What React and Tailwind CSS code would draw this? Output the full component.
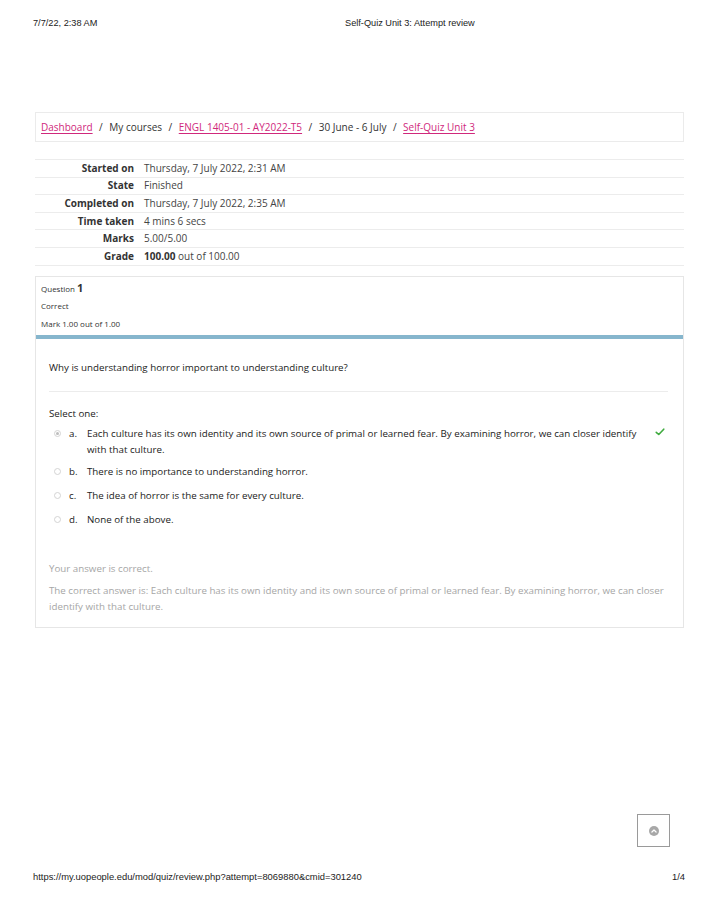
import React from "react";

const crumbs = [
  { text: "Dashboard", link: true },
  { text: "My courses", link: false },
  { text: "ENGL 1405-01 - AY2022-T5", link: true },
  { text: "30 June - 6 July", link: false },
  { text: "Self-Quiz Unit 3", link: true },
];

const summary = [
  ["Started on", "Thursday, 7 July 2022, 2:31 AM"],
  ["State", "Finished"],
  ["Completed on", "Thursday, 7 July 2022, 2:35 AM"],
  ["Time taken", "4 mins 6 secs"],
  ["Marks", "5.00/5.00"],
  ["Grade", null],
];

const options = [
  {
    letter: "a.",
    text: "Each culture has its own identity and its own source of primal or learned fear. By examining horror, we can closer identify with that culture.",
    checked: true,
  },
  { letter: "b.", text: "There is no importance to understanding horror." },
  { letter: "c.", text: "The idea of horror is the same for every culture." },
  { letter: "d.", text: "None of the above." },
];

function Radio({ checked }) {
  return (
    <span className="mt-[4.5px] flex h-[7px] w-[7px] shrink-0 items-center justify-center rounded-full border border-[#d4d4d4] bg-white">
      {checked && <span className="h-[3px] w-[3px] rounded-full bg-[#bdbdbd]" />}
    </span>
  );
}

export default function App() {
  return (
    <div
      className="relative flex h-[918px] w-[714px] flex-col bg-white text-[#1d2125]"
      style={{ fontFamily: '"Open Sans", "Noto Sans", sans-serif' }}
    >
      {/* print header */}
      <header
        className="flex px-[33px] pt-[18px] text-[9.2px] leading-[10px] text-[#222]"
        style={{ fontFamily: '"Liberation Sans", Arial, sans-serif' }}
      >
        <span className="w-[312px]">7/7/22, 2:38 AM</span>
        <span>Self-Quiz Unit 3: Attempt review</span>
      </header>

      <main className="ml-[35px] mr-[30px] mt-[84px] flex flex-col">
        {/* breadcrumb */}
        <nav className="flex h-[30px] items-center border border-[#ebebeb] px-[5px] text-[10px]">
          {crumbs.map((c, i) => (
            <React.Fragment key={c.text}>
              {i > 0 && <span className="mx-[6.5px] text-[#333]">/</span>}
              <span className={c.link ? "text-[#d0287c] underline underline-offset-2" : "text-[#333]"}>
                {c.text}
              </span>
            </React.Fragment>
          ))}
        </nav>

        {/* summary table */}
        <div className="mt-[17px] flex flex-col border-b border-[#ececec] text-[10px]">
          {summary.map(([label, value]) => (
            <div key={label} className="flex h-[17.6px] items-center border-t border-[#ececec]">
              <span className="w-[99px] text-right font-bold text-[#333]">{label}</span>
              <span className="ml-[10px] text-[#444]">
                {value ?? (
                  <>
                    <b className="text-[#333]">100.00</b> out of 100.00
                  </>
                )}
              </span>
            </div>
          ))}
        </div>

        {/* question */}
        <section className="mt-[10px] flex h-[352px] flex-col border border-[#e6e6e6]">
          <div className="flex flex-col px-[5px] pt-[6px] text-[8px] leading-[9px] text-[#333]">
            <div className="flex items-baseline">
              <span>Question</span>
              <span className="ml-[2px] text-[11px] font-bold">1</span>
            </div>
            <div className="mt-[8px]">Correct</div>
            <div className="mt-[9px]">Mark 1.00 out of 1.00</div>
          </div>
          <div className="mt-[7px] h-[4px] bg-[#86b6cd]" />

          <div className="flex flex-col px-[13px] text-[9.75px] leading-[16px]">
            <p className="mt-[21px] text-[#222]">Why is understanding horror important to understanding culture?</p>
            <div className="mt-[15px] mr-[2px] border-t border-[#ececec]" />
            <p className="mt-[14px] text-[#222]">Select one:</p>
            <div className="flex flex-col">
              {options.map((o) => (
                <div key={o.letter} className={`flex pl-[5px] pt-[4px] text-[#222] ${o.checked ? "pb-[2px]" : "pb-[4px]"}`}>
                  <Radio checked={o.checked} />
                  <span className="ml-[8px] w-[18px] shrink-0">{o.letter}</span>
                  <span className="w-[558px]">{o.text}</span>
                  {o.checked && (
                    <svg viewBox="0 0 16 16" className="ml-[10px] mt-[1px] h-[10px] w-[10px] shrink-0">
                      <path d="M2 8.5 L6 12 L14 3.5" fill="none" stroke="#3fab3f" strokeWidth="2.6" strokeLinecap="round" strokeLinejoin="round" />
                    </svg>
                  )}
                </div>
              ))}
            </div>
            <div className="mt-[29px] flex flex-col text-[#a6a6a6]">
              <p>Your answer is correct.</p>
              <p className="mt-[6px]">
                The correct answer is: Each culture has its own identity and its own source of primal or learned fear. By examining horror, we can closer identify with that culture.
              </p>
            </div>
          </div>
        </section>
      </main>

      <div className="flex-1" />

      {/* print footer */}
      <footer
        className="flex justify-between pl-[33px] pr-[29px] pb-[36px] text-[9.4px] leading-[10px] text-[#222]"
        style={{ fontFamily: '"Liberation Sans", Arial, sans-serif' }}
      >
        <span>https://my.uopeople.edu/mod/quiz/review.php?attempt=8069880&amp;cmid=301240</span>
        <span>1/4</span>
      </footer>

      {/* back to top button */}
      <div className="absolute left-[637px] top-[814px] flex h-[33px] w-[33px] items-center justify-center border-[1.5px] border-[#9a9a9a] bg-white">
        <svg viewBox="0 0 12 12" className="h-[10px] w-[10px]">
          <circle cx="6" cy="6" r="6" fill="#a8a8a8" />
          <path d="M3.5 7.2 L6 4.8 L8.5 7.2" fill="none" stroke="#fff" strokeWidth="1.5" strokeLinecap="round" strokeLinejoin="round" />
        </svg>
      </div>
    </div>
  );
}
